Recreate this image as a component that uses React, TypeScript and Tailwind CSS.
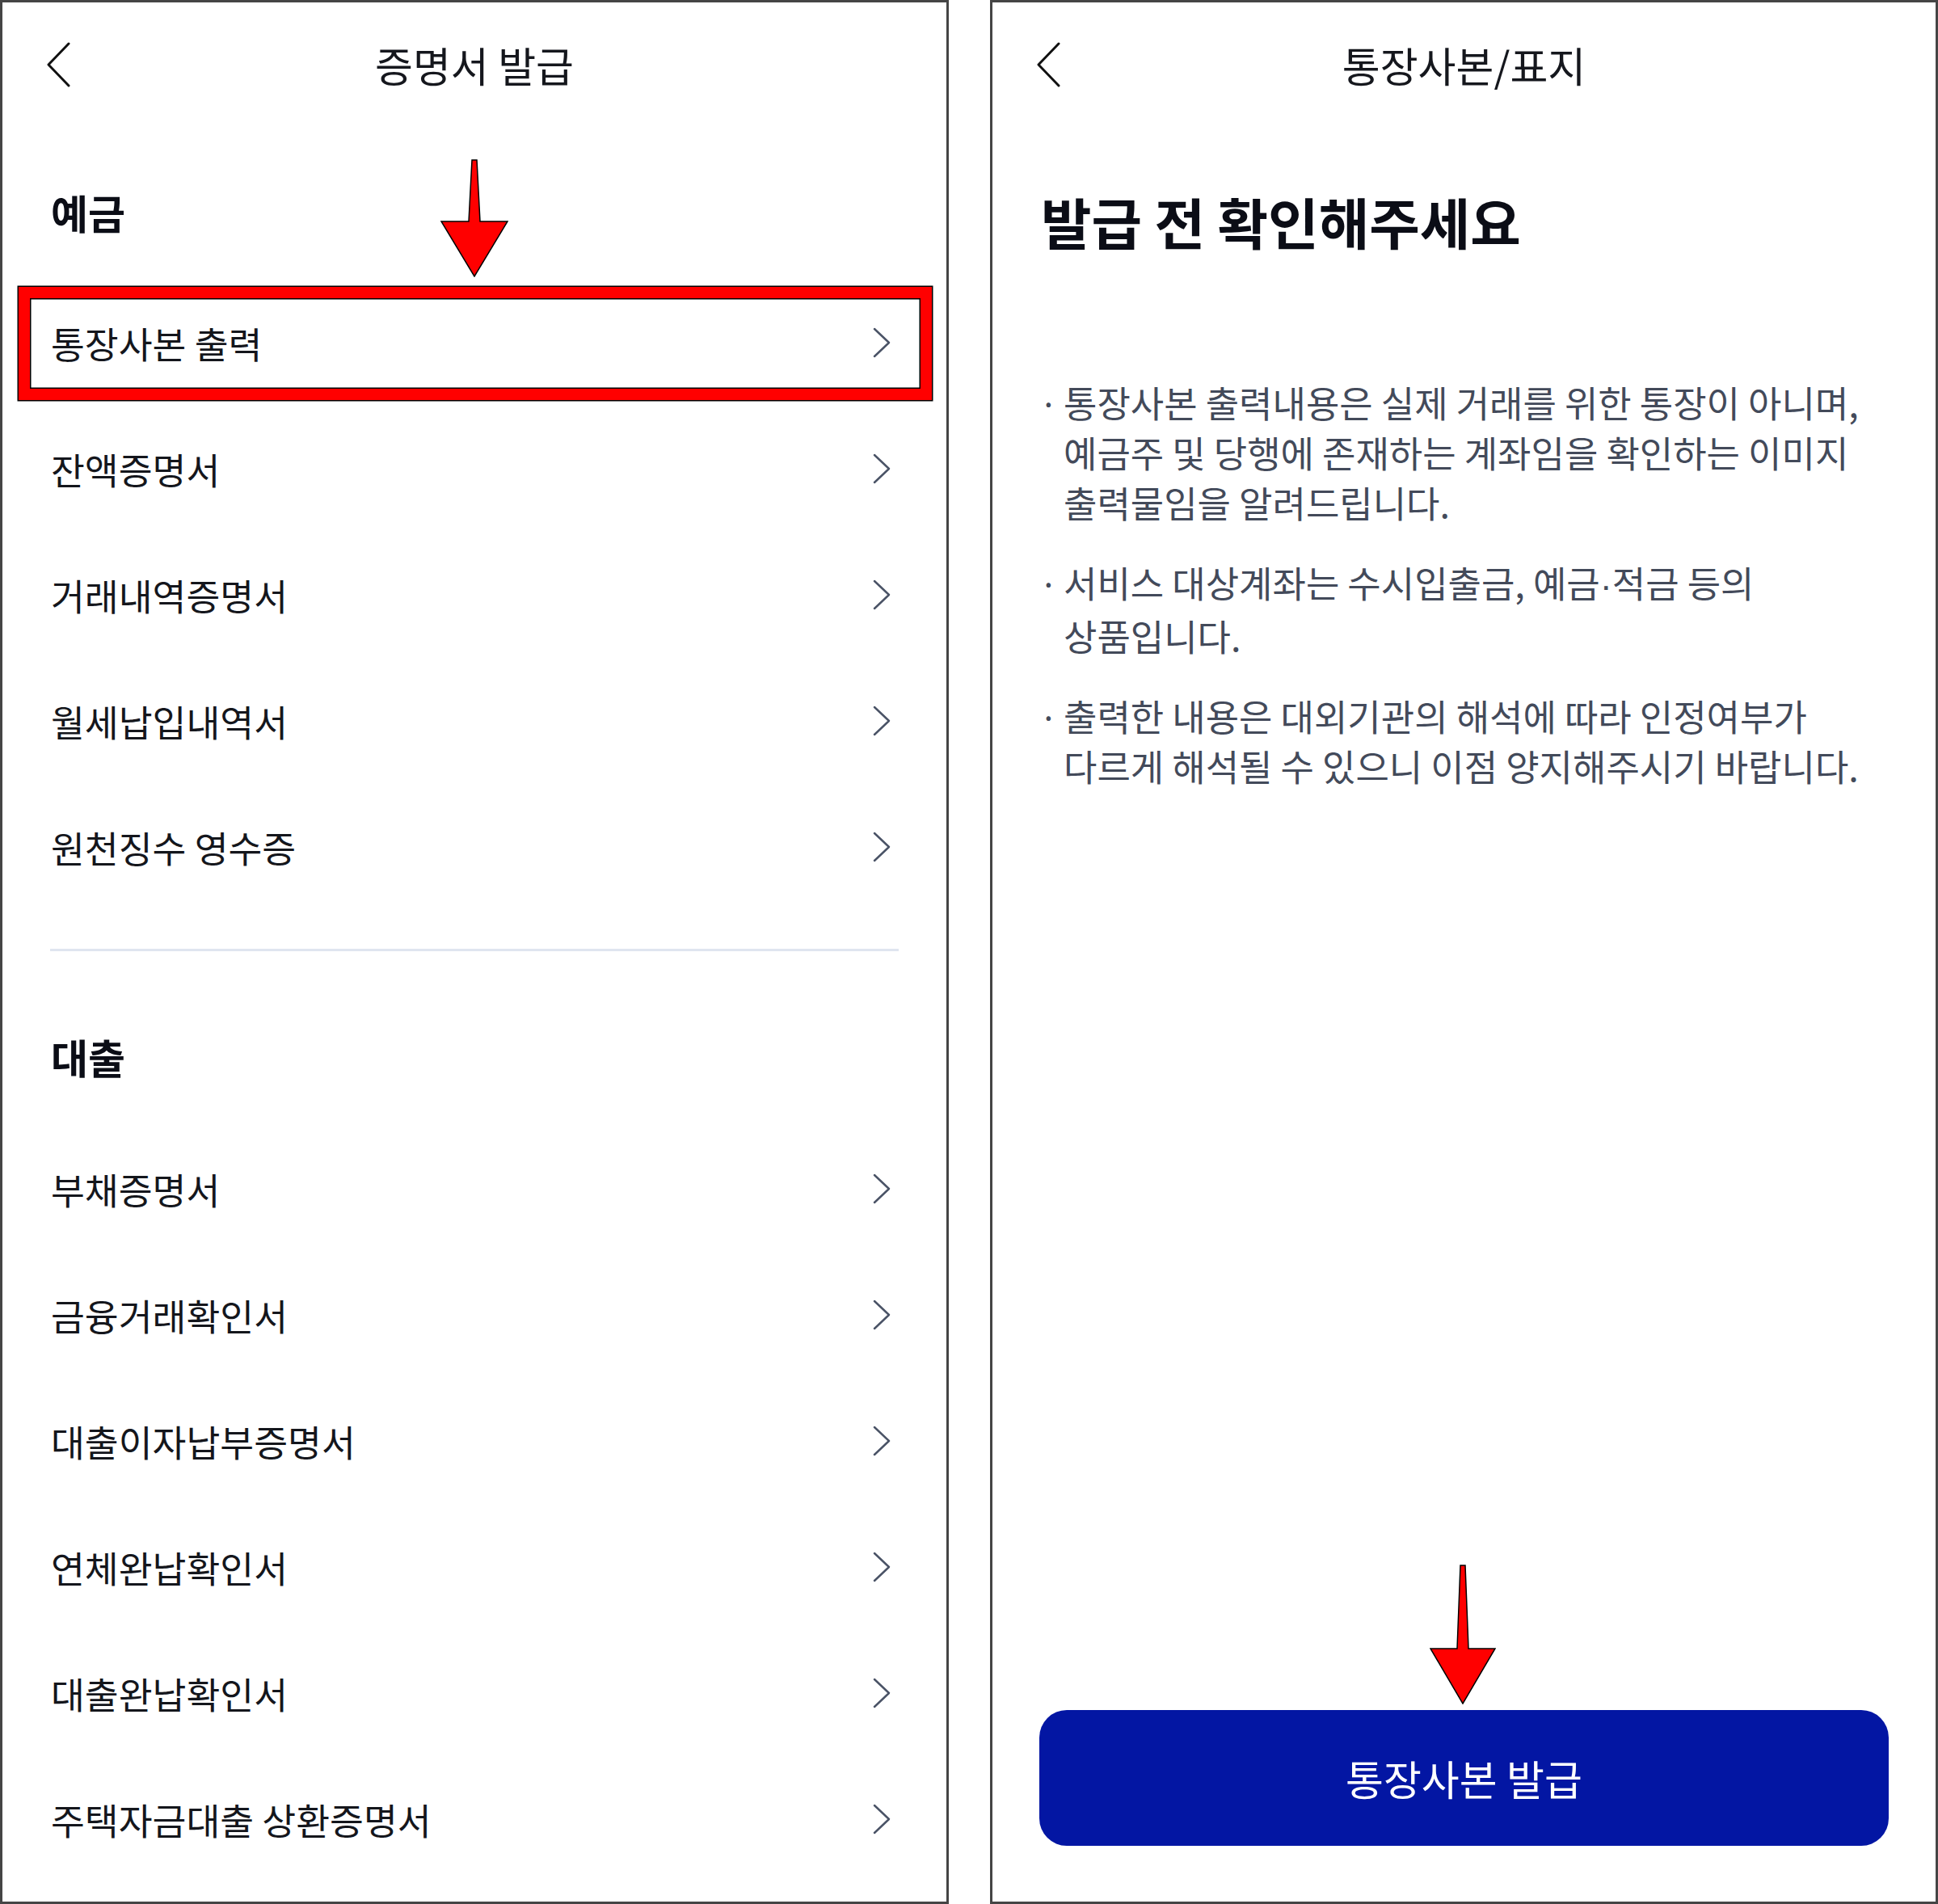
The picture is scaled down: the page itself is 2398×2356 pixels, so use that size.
import React from 'react';

const FONT = "font-['Noto_Sans_CJK_KR',sans-serif]";

// Back chevron in the top bar
const BackIcon: React.FC = () => (
  <svg width="32" height="56" viewBox="0 0 32 56" fill="none">
    <polyline points="29,2 4,28 29,54" stroke="#111" strokeWidth="3" strokeLinecap="round" strokeLinejoin="round" />
  </svg>
);

// Row chevron
const RowChevron: React.FC = () => (
  <svg width="24" height="38" viewBox="0 0 24 38" fill="none">
    <polyline points="3,2 21,19 3,36" stroke="#4a5366" strokeWidth="2.5" strokeLinecap="round" strokeLinejoin="round" />
  </svg>
);

// Red annotation arrow
const RedArrow: React.FC<{ shaft: number; head: number; width: number }> = ({ shaft, head, width }) => {
  const c = width / 2;
  const h = shaft + head;
  return (
    <svg width={width + 2} height={h + 2} viewBox={`-1 -1 ${width + 2} ${h + 2}`}>
      <polygon
        points={`${c - 3},0 ${c + 3},0 ${c + 7},${shaft} ${width},${shaft} ${c},${h} 0,${shaft} ${c - 7},${shaft}`}
        fill="#ff0000"
        stroke="#000"
        strokeWidth="1.5"
        strokeLinejoin="miter"
      />
    </svg>
  );
};

const TopBar: React.FC<{ title: string }> = ({ title }) => (
  <div className="h-[154px] grid grid-cols-[1fr_auto_1fr] items-center">
    <div className="pl-[53px] flex items-center">
      <BackIcon />
    </div>
    <div className="text-[51px] leading-[60px] text-[#15171d]">{title}</div>
    <div />
  </div>
);

const Row: React.FC<{ label: string; highlight?: boolean }> = ({ label, highlight }) => (
  <div className="relative h-[156px] flex items-center justify-between pl-[60px] pr-[68px]">
    <span className="text-[45.5px] leading-[56px] text-[#14161c]">{label}</span>
    <RowChevron />
    {highlight && (
      <div className="absolute top-[9px] bottom-[7px] left-[20px] right-[18px] border-[14px] border-[#ff0000] shadow-[0_0_0_1.5px_#000,inset_0_0_0_1.5px_#000]" />
    )}
  </div>
);

const deposit = ['통장사본 출력', '잔액증명서', '거래내역증명서', '월세납입내역서', '원천징수 영수증'];
const loan = ['부채증명서', '금융거래확인서', '대출이자납부증명서', '연체완납확인서', '대출완납확인서', '주택자금대출 상환증명서'];

const Dot: React.FC = () => <span className="font-['Liberation_Sans',sans-serif]">·</span>;

const notes: React.ReactNode[][] = [
  ['통장사본 출력내용은 실제 거래를 위한 통장이 아니며,', '예금주 및 당행에 존재하는 계좌임을 확인하는 이미지', '출력물임을 알려드립니다.'],
  [<>서비스 대상계좌는 수시입출금, 예금<Dot />적금 등의</>, '상품입니다.'],
  ['출력한 내용은 대외기관의 해석에 따라 인정여부가', '다르게 해석될 수 있으니 이점 양지해주시기 바랍니다.'],
];

export default function App() {
  return (
    <div className={`${FONT} w-[2398px] h-[2356px] bg-white flex`}>
      {/* left screen */}
      <div className="relative w-[1174px] h-[2356px] border-[3px] border-[#454545] flex flex-col">
        <TopBar title="증명서 발급" />
        <div className="pt-[75px] pb-[54px] pl-[60px] text-[50px] leading-[60px] font-bold text-[#0b0d16]">예금</div>
        {deposit.map((l, i) => (
          <Row key={l} label={l} highlight={i === 0} />
        ))}
        <div className="mt-[48px] mx-[59px] h-[3px] bg-[#dfe5f0]" />
        <div className="pt-[100px] pb-[56px] pl-[60px] text-[50px] leading-[60px] font-bold text-[#0b0d16]">대출</div>
        {loan.map((l) => (
          <Row key={l} label={l} />
        ))}
        <div className="absolute left-[542px] top-[194px]">
          <RedArrow shaft={76} head={68} width={82} />
        </div>
      </div>

      <div className="w-[51px]" />

      {/* right screen */}
      <div className="relative w-[1173px] h-[2356px] border-[3px] border-[#454545] flex flex-col">
        <TopBar title="통장사본/표지" />
        <div className="pt-[77px] pl-[60px] text-[68px] leading-[80px] font-bold text-[#0b0d16]">
          발급 전 확인해주세요
        </div>
        <div className="mt-[153px] pl-[58px] pr-[20px] flex flex-col gap-[37px]">
          {notes.map((lines, i) => (
            <div key={i} className="flex">
              <span className="w-[30px] shrink-0 text-[41px] leading-[62px] text-[#434a5a]">·</span>
              <div className="flex flex-col">
                {lines.map((t, j) => (
                  <span key={j} className="whitespace-nowrap text-[45px] leading-[62px] text-[#434a5a]">
                    {t}
                  </span>
                ))}
              </div>
            </div>
          ))}
        </div>
        <div className="flex-1" />
        <div className="mx-[58px] mb-[69px] h-[168px] rounded-[34px] bg-[#0316a3] flex items-center justify-center">
          <span className="text-[51px] leading-[60px] text-white">통장사본 발급</span>
        </div>
        <div className="absolute left-[541px] top-[1933px]">
          <RedArrow shaft={103} head={68} width={80} />
        </div>
      </div>
    </div>
  );
}
